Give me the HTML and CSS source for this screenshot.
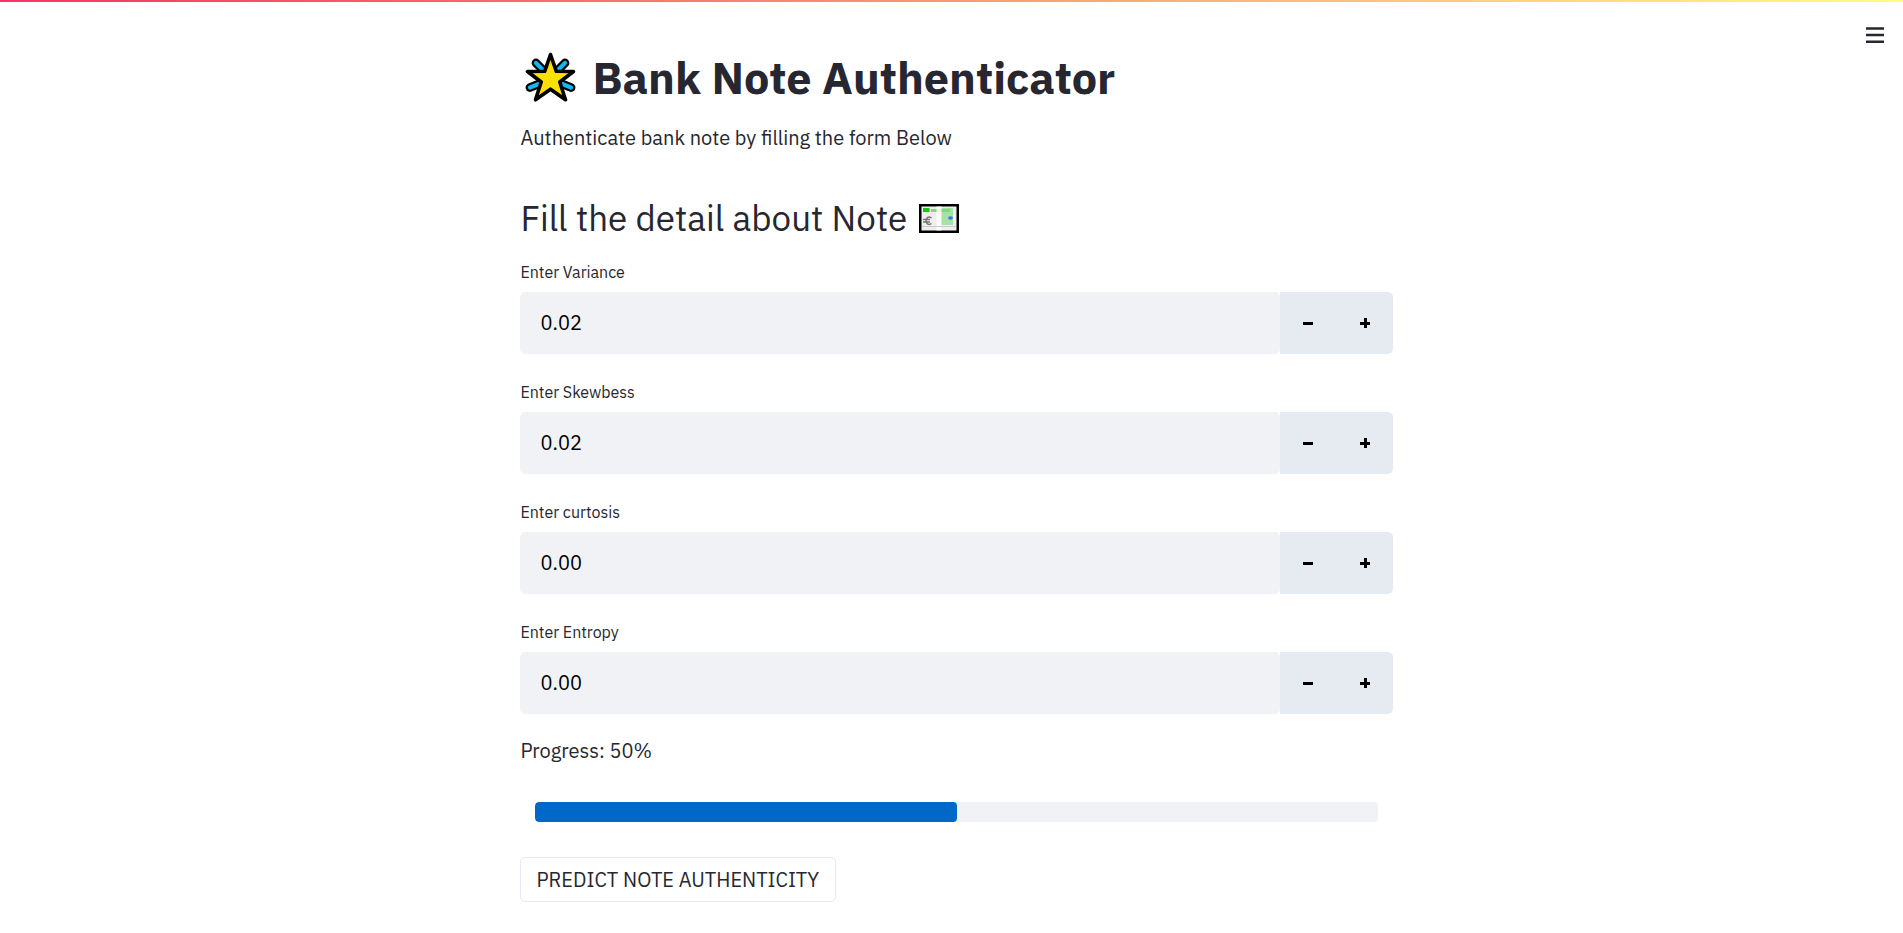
FILE: index.html
```html
<!DOCTYPE html>
<html lang="en">
<head>
<meta charset="utf-8">
<title>Bank Note Authenticator</title>
<link rel="stylesheet" href="styles.css">
</head>
<body>
<div class="decoration"></div>
<button class="menu" aria-label="Menu"><svg width="18" height="16" viewBox="0 0 18 16"><path d="M0 1.500h18M0 8.100h18M0 14.700h18" stroke="#262730" stroke-width="2.500"/></svg></button>
<main class="container">
  <h1 class="title">
    <svg class="star" width="51" height="51" viewBox="0 0 51 51">
      <g stroke-linecap="round"><path d="M11 11l7 7M40 11l-7 7M5 35.500l10-4M46 35.500l-10-4" stroke="#000" stroke-width="8.800"/><path d="M11 11l7 7M40 11l-7 7M5 35.500l10-4M46 35.500l-10-4" stroke="#12b8f5" stroke-width="4.200"/></g>
      <path d="M25.500 2.500L31.300 19.300L48.500 19.500L34.800 30L40.500 47.800L25.500 37.200L10.500 47.800L16.200 30L2.500 19.500L19.700 19.300Z" fill="#fce000" stroke="#000" stroke-width="3.600" stroke-linejoin="round"/>
    </svg>
    <span class="title-text">Bank Note Authenticator</span>
  </h1>
  <p class="intro">Authenticate bank note by filling the form Below</p>
  <h2 class="subtitle"><span>Fill the detail about Note</span>
    <svg class="note" width="40" height="29" viewBox="0 0 40 29">
      <rect width="40" height="29" fill="#000"/><rect x="2.500" y="2.500" width="35" height="24" fill="#eee"/>
      <rect x="22" y="4" width="12" height="17" fill="#a5e3a5"/><rect x="12" y="5" width="19" height="3" fill="#7fda7f"/><rect x="4" y="4" width="6.500" height="4" fill="#14c814"/>
      <rect x="17.500" y="2.500" width="5" height="24" fill="#fff" opacity=".8"/><path d="M3 22.500h34" stroke="#ccc"/>
      <path d="M12.500 14q-2-1.500-4-.5q-3 3 0 6.500q2 1 4-.5M4 15.500h7M4 18h7" fill="none" stroke="#777" stroke-width="1.500"/>
      <ellipse cx="31.500" cy="14" rx="2.500" ry="1.700" fill="#3975f5"/><rect x="34" y="11" width="2" height="6" fill="#fff"/>
    </svg>
  </h2>
  <div class="field"><label>Enter Variance</label><div class="number"><div class="value">0.02</div><div class="steps"><i class="minus"></i><i class="plus"></i></div></div></div>
  <div class="field"><label>Enter Skewbess</label><div class="number"><div class="value">0.02</div><div class="steps"><i class="minus"></i><i class="plus"></i></div></div></div>
  <div class="field"><label>Enter curtosis</label><div class="number"><div class="value">0.00</div><div class="steps"><i class="minus"></i><i class="plus"></i></div></div></div>
  <div class="field"><label>Enter Entropy</label><div class="number"><div class="value">0.00</div><div class="steps"><i class="minus"></i><i class="plus"></i></div></div></div>
  <p class="progress-text">Progress: 50%</p>
  <div class="track"><div class="fill"></div></div>
  <button class="predict">PREDICT NOTE AUTHENTICITY</button>
</main>
</body>
</html>
```
FILE: styles.css
```css
* { box-sizing: border-box; }
body { margin: 0; height: 933px; overflow: hidden; background: #fff; color: #262730; font-family: "IBM Plex Sans", Roboto, "Noto Sans", sans-serif; font-size: 20px; font-weight: 400; }
h1, h2, p { margin: 0; font-weight: 400; white-space: nowrap; }
.decoration { height: 2px; background: linear-gradient(90deg, #f63366, #fffd80); }
.menu { position: absolute; top: 27px; right: 19px; width: 18px; height: 16px; padding: 0; border: 0; background: none; }
.menu svg { display: block; }
.container { width: 873px; margin-left: 520.45px; padding-top: 47px; }
.title { display: flex; align-items: center; height: 60px; padding-left: 5px; font-size: 45px; font-weight: 700; }
.star { flex: none; margin-top: -3px; fill: none; }
.title-text { margin: -4px 0 0 16px; }
.intro { height: 24px; line-height: 24px; margin-top: 17px; }
.subtitle { display: flex; align-items: center; height: 46px; margin-top: 45px; font-size: 35px; }
.note { margin-left: 12px; }
.field { height: 120px; }
.field label { display: block; height: 20px; line-height: 20px; margin-bottom: 10px; font-size: 16px; }
.field:first-of-type { margin-top: 21px; }
.number { display: flex; height: 62px; border-radius: 5px; overflow: hidden; }
.value { flex: none; width: 760px; padding-left: 20px; line-height: 62px; color: #000; background: #f0f2f6; border-radius: 5px; }
.steps { flex: 1; display: flex; background: #e6eaf1; }
.steps i { position: relative; flex: none; width: 57px; }
.steps i::before, .steps .plus::after { content: ""; position: absolute; left: 23px; top: 30px; width: 10px; height: 2.500px; background: #000; }
.steps .plus::after { left: 27px; top: 26px; width: 3px; height: 10px; }
.progress-text { height: 24px; line-height: 24px; margin-top: -3px; }
.track { width: 843px; height: 20px; margin: 39px 15px 0; background: #f0f2f6; border-radius: 4px; overflow: hidden; }
.fill { width: 50%; height: 100%; border-radius: 4px; background: #0068c9; }
.predict { display: block; width: 316px; height: 45px; margin-top: 35px; padding: 0 0 0 15px; text-align: left; border: 1px solid #e6eaf1; border-radius: 5px; background: #fff; color: #262730; font: inherit; white-space: nowrap; }
```
